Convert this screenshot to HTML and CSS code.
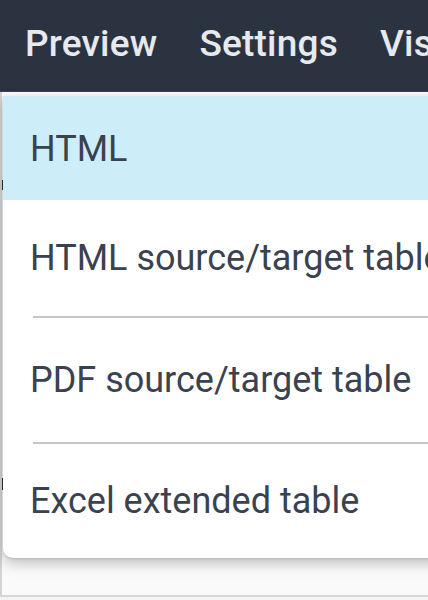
FILE: index.html
```html
<!DOCTYPE html>
<html lang="en">
<head>
<meta charset="utf-8">
<title>Preview menu</title>
<link rel="stylesheet" href="styles.css">
</head>
<body>
<header class="topbar">
  <span class="tab">Preview</span>
  <span class="tab">Settings</span>
  <span class="tab">Vis</span>
</header>
<main class="page">
  <div class="backdrop">
    <div class="bg-mark bg-mark-1"></div>
    <div class="bg-mark bg-mark-2"></div>
  </div>
  <div class="bottom-line"></div>
  <ul class="menu">
    <li class="item item-1 active">HTML</li>
    <li class="item item-2">HTML source/target table</li>
    <li class="divider"></li>
    <li class="item item-3">PDF source/target table</li>
    <li class="divider"></li>
    <li class="item item-4">Excel extended table</li>
  </ul>
</main>
</body>
</html>
```

FILE: styles.css
```css
html, body {
  margin: 0;
  padding: 0;
}
body {
  width: 428px;
  height: 600px;
  overflow: hidden;
  background: #ffffff;
  font-family: Roboto, "Liberation Sans", sans-serif;
}
.topbar {
  height: 92px;
  background: #2c3340;
  display: flex;
  align-items: center;
  gap: 42px;
  padding-left: 25px;
  padding-bottom: 4px;
  white-space: nowrap;
  overflow: hidden;
  box-sizing: border-box;
  border-bottom: 1px solid #3d4350;
}
.tab {
  color: #e6eaee;
  font-size: 37px;
  font-weight: 500;
  letter-spacing: 0.2px;
}
.page {
  position: relative;
  height: 508px;
  background: #f4f4f4;
}
.backdrop {
  height: 503px;
  box-sizing: border-box;
  padding-top: 88px;
  border-left: 2px solid #d4d4d4;
  background: #fafafa;
  display: flex;
  flex-direction: column;
}
.bg-mark {
  width: 2px;
  background: #2d3340;
}
.bg-mark-1 {
  height: 10px;
}
.bg-mark-2 {
  height: 12px;
  margin-top: 288px;
}
.bottom-line {
  height: 2px;
  background: #d6d6d6;
}
.menu {
  position: absolute;
  top: 4px;
  left: 3px;
  right: -40px;
  margin: 0;
  padding: 0;
  list-style: none;
  background: #ffffff;
  border-radius: 0 0 0 10px;
  box-shadow: 0 6px 14px rgba(0, 0, 0, 0.22), 0 1px 3px rgba(0, 0, 0, 0.12);
  overflow: hidden;
}
.item {
  display: flex;
  align-items: center;
  padding-left: 27px;
  font-size: 36px;
  color: #3a4250;
  white-space: nowrap;
}
.item-1 { height: 104px; padding-top: 2px; box-sizing: border-box; }
.item-2 { height: 116px; }
.item-3 { height: 124px; }
.item-4 { height: 114px; }
.active {
  background: #cdeef9;
}
.divider {
  height: 2px;
  margin-left: 30px;
  background: #c6c6c6;
}
```
